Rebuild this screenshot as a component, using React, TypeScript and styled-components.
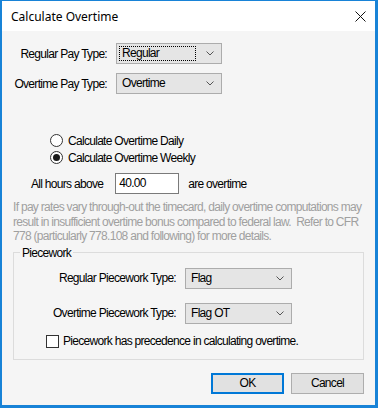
import React from 'react'
import styled, { createGlobalStyle } from 'styled-components'

const GlobalStyle = createGlobalStyle`
  html, body {
    margin: 0;
    padding: 0;
    background: #ffffff;
  }
`

const Chevron = () => (
  <svg width="8" height="5" viewBox="0 0 8 5">
    <polyline points="0.5,0.5 4,4 7.5,0.5" fill="none" stroke="#555" strokeWidth="1" />
  </svg>
)

const CloseIcon = () => (
  <svg width="11" height="11" viewBox="0 0 11 11">
    <path d="M0.5 0.5 L10.5 10.5 M10.5 0.5 L0.5 10.5" stroke="#111" strokeWidth="1" />
  </svg>
)

type DropProps = { value: string; focused?: boolean; width: number }

const Dropdown = ({ value, focused, width }: DropProps) => (
  <SelectBox style={{ width }}>
    <SelectValue focused={focused}>{value}</SelectValue>
    <Chevron />
  </SelectBox>
)

const App = () => {
  return (
    <>
      <GlobalStyle />
      <Window>
        <TitleBar>
          <Title>Calculate Overtime</Title>
          <CloseBtn>
            <CloseIcon />
          </CloseBtn>
        </TitleBar>
        <Body>
          <PayGrid>
            <Label>Regular Pay Type:</Label>
            <Dropdown value="Regular" focused width={106} />
            <Label>Overtime Pay Type:</Label>
            <Dropdown value="Overtime" width={106} />
          </PayGrid>

          <RadioGroup>
            <RadioRow>
              <Radio />
              <span>Calculate Overtime Daily</span>
            </RadioRow>
            <RadioRow>
              <Radio checked />
              <span>Calculate Overtime Weekly</span>
            </RadioRow>
          </RadioGroup>

          <HoursRow>
            <Text>All hours above</Text>
            <HoursInput>40.00</HoursInput>
            <Text>are overtime</Text>
          </HoursRow>

          <Note>
            If pay rates vary through-out the timecard, daily overtime computations may<br />
            result in insufficient overtime bonus compared to federal law.&nbsp; Refer to CFR<br />
            778 (particularly 778.108 and following) for more details.
          </Note>

          <GroupBox>
            <Legend>Piecework</Legend>
            <PieceGrid>
              <Label>Regular Piecework Type:</Label>
              <Dropdown value="Flag" width={107} />
              <Label>Overtime Piecework Type:</Label>
              <Dropdown value="Flag OT" width={107} />
            </PieceGrid>
            <CheckRow>
              <CheckBox />
              <span>Piecework has precedence in calculating overtime.</span>
            </CheckRow>
          </GroupBox>

          <ButtonBar>
            <Button primary>OK</Button>
            <Button>Cancel</Button>
          </ButtonBar>
        </Body>
      </Window>
    </>
  )
}

const Window = styled.div`
  width: 378px;
  height: 408px;
  box-sizing: border-box;
  border-style: solid;
  border-color: #1883d7;
  border-width: 1px 3px 3px 2px;
  display: flex;
  flex-direction: column;
  background: #f5f5f5;
  font-family: "Liberation Sans", Arial, sans-serif;
  font-size: 12px;
  letter-spacing: -0.7px;
  color: #000;
`

const TitleBar = styled.div`
  height: 30px;
  background: #ffffff;
  display: flex;
  align-items: center;
  justify-content: space-between;
  padding: 0 9px 0 9px;
  flex-shrink: 0;
`

const Title = styled.div`
  font-family: "Noto Sans", "Open Sans", sans-serif;
  font-size: 12px;
  letter-spacing: 0;
  color: #000;
`

const CloseBtn = styled.div`
  display: flex;
  align-items: center;
`

const Body = styled.div`
  flex: 1;
  display: flex;
  flex-direction: column;
  padding: 12px 11px 0 11px;
`

const PayGrid = styled.div`
  display: grid;
  grid-template-columns: 94px auto;
  justify-content: start;
  column-gap: 9px;
  row-gap: 9px;
  align-items: center;
`

const Label = styled.div`
  text-align: right;
  white-space: nowrap;
`

const SelectBox = styled.div`
  height: 21px;
  box-sizing: border-box;
  border: 1px solid #acacac;
  background: #e5e5e5;
  display: flex;
  align-items: center;
  justify-content: space-between;
  padding: 0 7px 0 2px;
`

const SelectValue = styled.div<{ focused?: boolean }>`
  flex: 1;
  height: 15px;
  line-height: 13px;
  padding-left: 2px;
  margin-right: 10px;
  box-sizing: border-box;
  border: 1px dotted ${p => (p.focused ? '#000' : 'transparent')};
`

const RadioGroup = styled.div`
  margin-top: 38px;
  padding-left: 37px;
  display: flex;
  flex-direction: column;
`

const RadioRow = styled.div`
  height: 17px;
  display: flex;
  align-items: center;
  gap: 5px;
`

const Radio = styled.span<{ checked?: boolean }>`
  width: 13px;
  height: 13px;
  box-sizing: border-box;
  border-radius: 50%;
  border: 1px solid #333;
  background: #fff;
  display: inline-flex;
  align-items: center;
  justify-content: center;
  &::after {
    content: '';
    width: 7px;
    height: 7px;
    border-radius: 50%;
    background: ${p => (p.checked ? '#1a1a1a' : 'transparent')};
  }
`

const HoursRow = styled.div`
  margin-top: 7px;
  padding-left: 18px;
  display: flex;
  align-items: center;
`

const Text = styled.span`
  white-space: nowrap;
`

const HoursInput = styled.div`
  width: 64px;
  height: 21px;
  box-sizing: border-box;
  border: 1px solid #7a7a7a;
  background: #fff;
  margin: 0 9px 0 12px;
  padding-left: 3px;
  line-height: 19px;
`

const Note = styled.div`
  margin-top: 6px;
  color: #a0a0a0;
  line-height: 14.5px;
  white-space: nowrap;
`

const GroupBox = styled.fieldset`
  margin: 2px 0 0 0;
  padding: 8px 0 0 0;
  border: 1px solid #dcdcdc;
  min-width: 0;
  height: 114px;
  box-sizing: border-box;
`

const Legend = styled.legend`
  margin-left: 6px;
  padding: 0 2px;
  line-height: 14px;
`

const PieceGrid = styled.div`
  display: grid;
  grid-template-columns: 162px auto;
  justify-content: start;
  column-gap: 9px;
  row-gap: 14px;
  align-items: center;
`

const CheckRow = styled.div`
  height: 17px;
  margin-top: 9px;
  padding-left: 32px;
  display: flex;
  align-items: center;
  gap: 4px;
`

const CheckBox = styled.span`
  width: 13px;
  height: 13px;
  box-sizing: border-box;
  border: 1px solid #333;
  background: #fff;
`

const ButtonBar = styled.div`
  display: flex;
  justify-content: flex-end;
  gap: 7px;
  margin-top: 13px;
`

const Button = styled.div<{ primary?: boolean }>`
  width: 73px;
  height: 21px;
  box-sizing: border-box;
  border: ${p => (p.primary ? '2px solid #0078d7' : '1px solid #adadad')};
  background: #e1e1e1;
  display: flex;
  align-items: center;
  justify-content: center;
`

export default App
